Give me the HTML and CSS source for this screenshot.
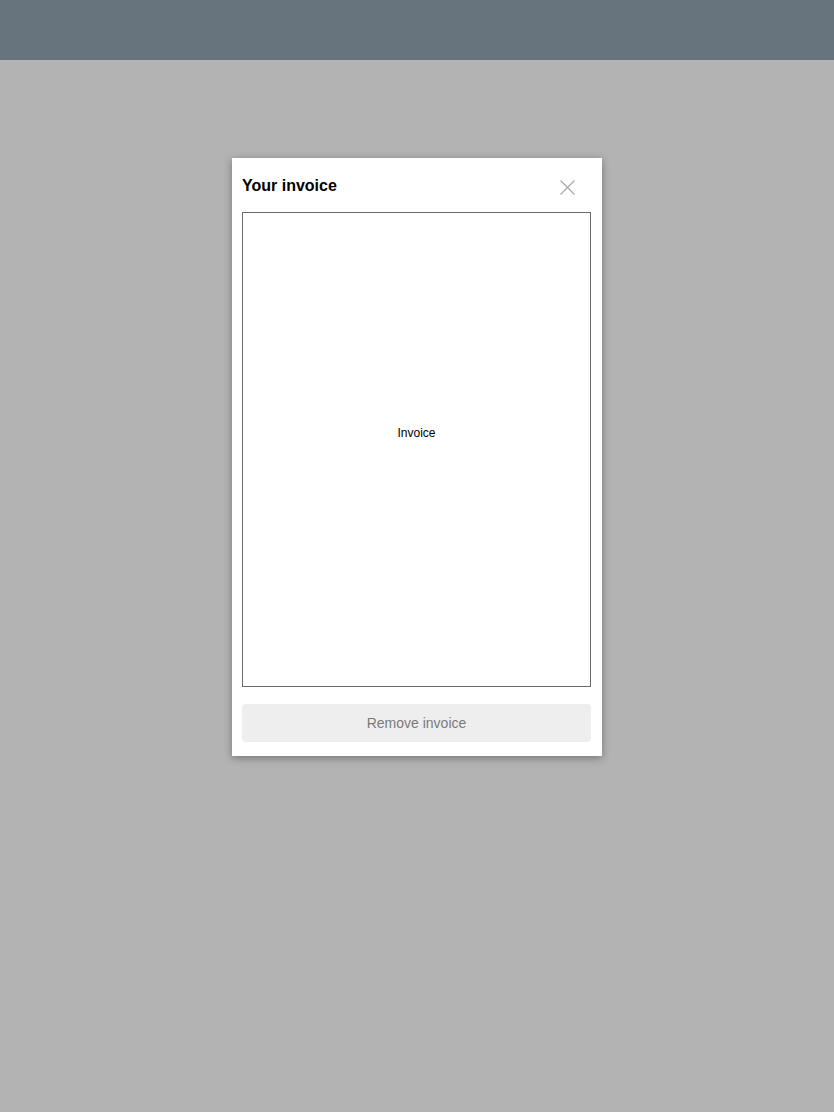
FILE: index.html
```html
<!DOCTYPE html>
<html>
<head>
<meta charset="utf-8">
<link rel="stylesheet" href="styles.css">
</head>
<body>
<div class="header"></div>
<div class="overlay">
  <div class="modal">
    <div class="modal-head">
      <h1 class="title">Your invoice</h1>
      <button class="close" aria-label="Close">
        <svg width="17" height="17" viewBox="0 0 17 17"><path d="M1.5 1.5 L15.5 15.5 M15.5 1.5 L1.5 15.5" stroke="#a6a6a6" stroke-width="1.1" fill="none"/></svg>
      </button>
    </div>
    <div class="frame">
      <div class="frame-inner">Invoice</div>
    </div>
    <button class="remove">Remove invoice</button>
  </div>
</div>
</body>
</html>
```

FILE: styles.css
```css
html, body {
  margin: 0;
  padding: 0;
  height: 100%;
}
body {
  background: #b3b3b3;
  font-family: "Liberation Sans", Arial, sans-serif;
  display: flex;
  flex-direction: column;
}
.header {
  height: 60px;
  background: #67737d;
  flex: none;
}
.overlay {
  flex: 1;
  display: flex;
  justify-content: center;
  align-items: flex-start;
  padding-top: 98px;
}
.modal {
  width: 370px;
  box-sizing: border-box;
  background: #fff;
  padding: 10px 11px 14px 10px;
  box-shadow: 0 2px 8px rgba(0,0,0,0.35);
  display: flex;
  flex-direction: column;
}
.modal-head {
  height: 34px;
  margin-bottom: 10px;
  display: flex;
  align-items: center;
  justify-content: space-between;
}
.title {
  margin: 2px 0 0 0;
  font-size: 16px;
  font-weight: bold;
  color: #000;
}
.close {
  border: 0;
  background: none;
  padding: 0;
  width: 17px;
  height: 17px;
  margin-right: 15px;
  margin-top: 4px;
  display: flex;
  cursor: pointer;
}
.frame {
  height: 475px;
  box-sizing: border-box;
  border: 1px solid #6b6b6b;
}
.frame-inner {
  height: 440px;
  display: flex;
  align-items: center;
  justify-content: center;
  font-size: 12px;
  color: #000;
}
.remove {
  margin-top: 17px;
  height: 38px;
  border: 0;
  border-radius: 4px;
  background: #eeeeee;
  color: #7a7a7a;
  font-family: "Liberation Sans", Arial, sans-serif;
  font-size: 14px;
  padding: 0;
}
```
